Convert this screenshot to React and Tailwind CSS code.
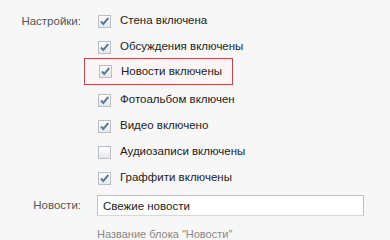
import React from 'react';

const options = [
    { label: 'Стена включена', checked: true },
    { label: 'Обсуждения включены', checked: true },
    { label: 'Новости включены', checked: true, highlight: true },
    { label: 'Фотоальбом включен', checked: true },
    { label: 'Видео включено', checked: true },
    { label: 'Аудиозаписи включены', checked: false },
    { label: 'Граффити включены', checked: true },
];

const Checkbox = ({ checked }) => (
    <span className="w-[13px] h-[13px] border border-[#b9bec4] bg-gradient-to-b from-white to-[#e6e8eb] flex items-center justify-center shrink-0">
        {checked && (
            <svg width="11" height="11" viewBox="0 0 11 11">
                <path d="M2 5.5 L4.3 8 L9.3 2" fill="none" stroke="#5d7b98" strokeWidth="2" />
            </svg>
        )}
    </span>
);

const App = () => {
    return (
        <div className="w-[390px] h-[240px] bg-[#f7f7f7] overflow-hidden text-[11.5px] font-['Liberation_Sans',Arial,sans-serif]">
            <div className="grid grid-cols-[84px_1fr] pt-[8px]">
                <div className="text-right pr-[3px] text-[#555] leading-[26px] h-[26px]">Настройки:</div>
                <div className="flex flex-col">
                    {options.map((o, i) => (
                        <label
                            key={i}
                            className={`flex items-center gap-[9px] h-[26px] pl-[14px] text-[#222] ${o.highlight ? 'border border-[#c3474f] w-[149px] pl-[13px] bg-[#fbf5f5] -mt-[2px] mb-[2px] h-[27px]' : ''}`}
                        >
                            <Checkbox checked={o.checked} />
                            <span>{o.label}</span>
                        </label>
                    ))}
                </div>
            </div>

            <div className="grid grid-cols-[84px_1fr] mt-[4px]">
                <div className="text-right pr-[3px] text-[#555] leading-[21px]">Новости:</div>
                <div className="pl-[13px]">
                    <input
                        readOnly
                        value="Свежие новости"
                        className="w-[267px] h-[21px] border border-[#c0c0c0] border-b-[#d8d8d8] bg-white px-[5px] text-[11.5px] text-[#222] outline-none"
                    />
                    <p className="text-[11px] text-[#888] mt-[10px]">Название блока "Новости"</p>
                </div>
            </div>
        </div>
    );
};

export default App;
